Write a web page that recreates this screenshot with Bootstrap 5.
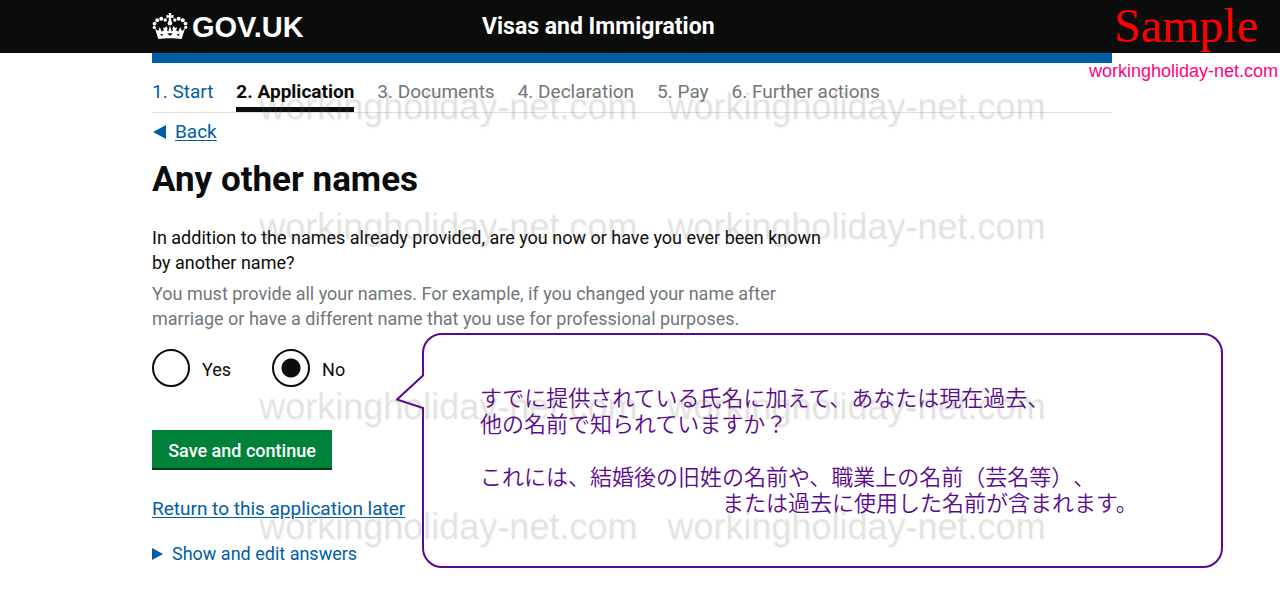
<!DOCTYPE html>
<html lang="en">
<head>
<meta charset="utf-8">
<meta name="viewport" content="width=device-width, initial-scale=1">
<title>Any other names - Visas and Immigration - GOV.UK</title>
<link href="https://cdn.jsdelivr.net/npm/bootstrap@5.3.0/dist/css/bootstrap.min.css" rel="stylesheet">
<style>
  :root { --ink: #0b0c0c; --link: #005ea5; --muted-ink: #6f777b; --note: #5a0a8c; }
  body { font-family: Roboto, "Liberation Sans", sans-serif; font-size: 18px; line-height: 25px; color: var(--ink); }
  a { color: var(--link); text-underline-offset: 2px; }
  .gutter-end { padding-right: 16px; }
  .page-width { max-width: 960px; }
  .site-header { background: var(--ink); min-height: 53px; }
  .site-header a { color: #fff; }
  .logo-text { font: bold 29px/36px "Liberation Sans", sans-serif; }
  .service-name { font-size: 23px; font-weight: 700; line-height: 30px; margin-left: 10px; }
  .brand-bar { height: 10px; background: var(--link); }
  .steps, .back-link, .later { font-size: 19px; }
  .steps { gap: 23px; padding-top: 16px; border-bottom: 1px solid #dee0e2; color: var(--muted-ink); }
  .steps li { padding-bottom: 3px; border-bottom: 5px solid transparent; }
  .steps a { text-decoration: none; }
  .steps .current { color: var(--ink); font-weight: 700; border-color: var(--ink); }
  .back-link { margin-top: 6px; gap: 8px; }
  .page-title { font-size: 35px; font-weight: 700; line-height: 40px; margin: 16px 0 0; }
  .question { max-width: 690px; margin-top: 25px; }
  .hint { color: var(--muted-ink); margin: 6px 0 0; max-width: 650px; }
  .choices { gap: 41px; margin-top: 18px; }
  .choices .form-check-input { width: 38px; height: 38px; border: 2px solid var(--ink); background-size: 100%; }
  .choices .form-check-input:checked { background-color: #fff; background-image: radial-gradient(circle, var(--ink) 9px, transparent 10px); }
  .choices label { padding-left: 12px; padding-top: 2px; }
  .btn-save { --bs-btn-color: #fff; --bs-btn-bg: #00823b; --bs-btn-hover-color: #fff; --bs-btn-hover-bg: #00692f; --bs-btn-border-radius: 0;
    border: 0; box-shadow: inset 0 -2px 0 #003618; font-size: 18px; line-height: 25px; font-weight: 500; height: 40px; width: 180px; padding: 0; margin-top: 43px; }
  .later { margin-top: 26px; }
  .answers { margin-top: 20px; color: var(--link); }
  .answers summary { list-style: none; gap: 9px; }
  .note { top: 333px; left: 270px; width: 801px; height: 235px; border: 2px solid var(--note); border-radius: 20px;
    padding: 48px 0 0 56px; color: var(--note); font: 350 22px/26px "Noto Sans CJK JP", sans-serif; text-spacing-trim: space-all; }
  .note p { margin: 0 0 27px; white-space: nowrap; }
  .note .indent { padding-left: 242px; }
  .note-tail { left: -28px; top: 38px; }
  .sample { top: -4px; right: 2px; text-align: right; }
  .sample-word { font: 48px/60px "Liberation Serif", serif; color: #f00; padding-right: 20px; }
  .sample-site { font: 18px/24px "Liberation Sans", sans-serif; color: #ff0080; margin-top: 3px; }
  .watermark { top: 86px; left: 50%; margin-left: -381px; gap: 30px; row-gap: 78px; pointer-events: none; width: 800px;
    font: 36px/42px "Liberation Sans", sans-serif; color: rgba(90,90,80,.13); text-shadow: 1px 1px 2px rgba(120,120,100,.08); }
  .watermark .later-row { margin-top: 60px; }
</style>
</head>
<body class="position-relative min-vh-100">
<header class="site-header gutter-end d-flex align-items-center">
  <div class="page-width container-fluid px-0 d-flex align-items-center">
    <a href="#" class="d-flex align-items-center text-decoration-none col-4 pe-2">
      <svg width="36" height="28" viewBox="0 0 36 28" fill="#fff" aria-hidden="true">
        <path d="M16.600 0h2.800l-.5 2.400 2.600-.6v3.400l-2.600-.6.6 4.400h-3l.6-4.400-2.600.6V1.800l2.600.6z"/>
        <circle cx="18" cy="10.300" r="2.300"/>
        <circle cx="13.200" cy="7" r="1.700"/><circle cx="9.300" cy="5.800" r="2"/><circle cx="5.200" cy="7.300" r="2"/><circle cx="2.500" cy="10.600" r="1.900"/><circle cx="2.300" cy="14.400" r="1.600"/>
        <circle cx="22.800" cy="7" r="1.700"/><circle cx="26.700" cy="5.800" r="2"/><circle cx="30.800" cy="7.300" r="2"/><circle cx="33.500" cy="10.600" r="1.900"/><circle cx="33.700" cy="14.400" r="1.600"/>
        <path d="M3 15.500l3.200 2.500 1.600-4 1.800 4.500 2.300-1-1-3.200 2 .6 1.400-1.800 1.400 2.600-.8 1.800 1.500.8L18 12.600l1.600 5.700 1.500-.8-.8-1.800 1.400-2.600 1.400 1.800 2-.6-1 3.200 2.300 1 1.800-4.500 1.600 4 3.200-2.500L29.700 26c-7-1-16.400-1-23.400 0z"/>
        <path d="M8.500 20.500l3 1.300-2.500 1.200zm6.700-.2h5.600L18 23zm12.300.2l-3 1.300 2.500 1.200z" fill="#0b0c0c"/>
      </svg>
      <span class="logo-text ms-1">GOV.UK</span>
    </a>
    <a href="#" class="service-name text-decoration-none">Visas and Immigration</a>
  </div>
</header>

<div class="gutter-end">
<div class="page-width container-fluid px-0">
  <div class="brand-bar"></div>
  <nav aria-label="Progress">
    <ol class="steps list-unstyled d-flex flex-wrap mb-0">
      <li><a href="#">1. Start</a></li>
      <li class="current" aria-current="step">2. Application</li>
      <li>3. Documents</li>
      <li>4. Declaration</li>
      <li>5. Pay</li>
      <li>6. Further actions</li>
    </ol>
  </nav>
  <div class="back-link d-flex align-items-center">
    <svg width="15" height="14" viewBox="0 0 15 14" fill="#005ea5" aria-hidden="true"><path d="M1 7L14 0v14z"/></svg>
    <a href="#">Back</a>
  </div>

  <main>
    <h1 class="page-title">Any other names</h1>
    <form>
      <fieldset>
        <div class="question">
          <div id="question">In addition to the names already provided, are you now or have you ever been known by another name?</div>
          <p class="hint">You must provide all your names. For example, if you changed your name after marriage or have a different name that you use for professional purposes.</p>
        </div>
        <div class="choices d-flex" role="radiogroup" aria-labelledby="question">
          <div class="d-flex align-items-center">
            <input class="form-check-input m-0" type="radio" name="other" id="yes"><label for="yes">Yes</label>
          </div>
          <div class="d-flex align-items-center">
            <input class="form-check-input m-0" type="radio" name="other" id="no" checked><label for="no">No</label>
          </div>
        </div>
      </fieldset>
      <button type="submit" class="btn btn-save d-block">Save and continue</button>
    </form>
    <div class="later"><a href="#">Return to this application later</a></div>
    <details class="answers">
      <summary class="d-flex align-items-center">
        <svg width="11" height="12" viewBox="0 0 11 12" fill="#005ea5" aria-hidden="true"><path d="M0 0l11 6-11 6z"/></svg>
        Show and edit answers
      </summary>
    </details>
  </main>
</div>
</div>

<div class="gutter-end position-absolute top-0 start-0 w-100 pe-none">
  <div class="page-width container-fluid px-0 position-relative">
    <aside class="note position-absolute" lang="ja">
      <svg class="note-tail position-absolute" width="30" height="38" viewBox="0 0 30 38" aria-hidden="true">
        <path d="M25 2.500h4v33h-4z" fill="#fff"/>
        <path d="M27 0v2.500L1 26.500 27 35v3" fill="none" stroke="#5a0a8c" stroke-width="2"/>
      </svg>
      <p>すでに提供されている氏名に加えて、あなたは現在過去、<br>他の名前で知られていますか？</p>
      <p>これには、結婚後の旧姓の名前や、職業上の名前（芸名等）、<br><span class="indent">または過去に使用した名前が含まれます。</span></p>
    </aside>
  </div>
</div>

<div class="sample position-absolute">
  <div class="sample-word">Sample</div>
  <div class="sample-site">workingholiday-net.com</div>
</div>

<div class="watermark position-absolute d-flex flex-wrap" aria-hidden="true">
  <span>workingholiday-net.com</span><span>workingholiday-net.com</span>
  <span>workingholiday-net.com</span><span>workingholiday-net.com</span>
  <span class="later-row">workingholiday-net.com</span><span class="later-row">workingholiday-net.com</span>
  <span>workingholiday-net.com</span><span>workingholiday-net.com</span>
</div>
<script src="https://cdn.jsdelivr.net/npm/bootstrap@5.3.0/dist/js/bootstrap.bundle.min.js"></script>
</body>
</html>
